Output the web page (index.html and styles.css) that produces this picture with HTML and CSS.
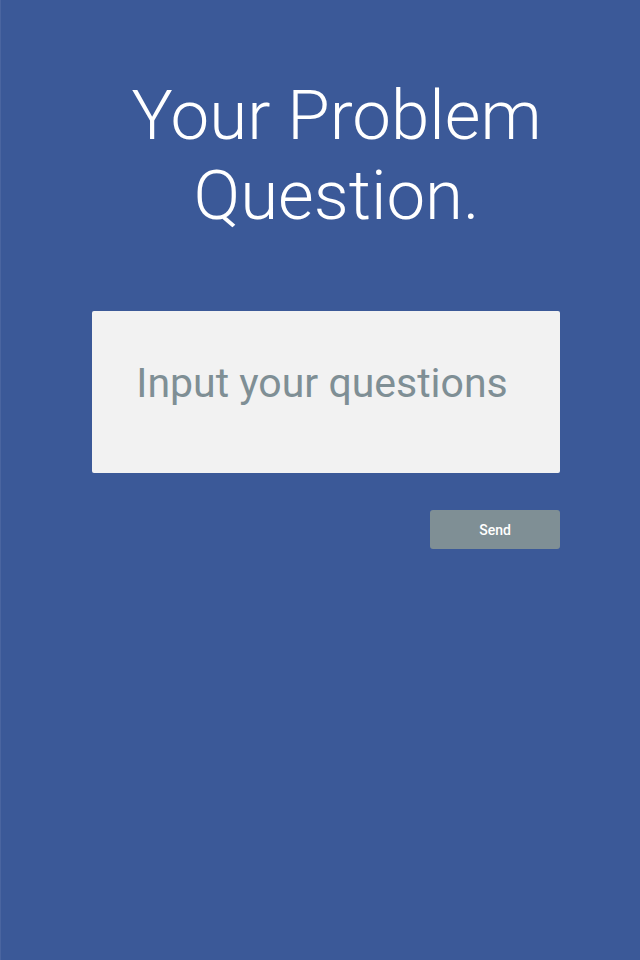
FILE: index.html
```html
<!DOCTYPE html>
<html>
<head>
<meta charset="utf-8">
<link rel="stylesheet" href="styles.css">
</head>
<body>
<main class="page">
  <h1 class="title">Your Problem<br>Question.</h1>
  <div class="form">
    <div class="input-box">
      <span class="placeholder">Input your questions</span>
    </div>
    <div class="actions">
      <button class="send">Send</button>
    </div>
  </div>
</main>
</body>
</html>
```

FILE: styles.css
```css
html, body {
  margin: 0;
  padding: 0;
  height: 100%;
}
body {
  background: #3b5998;
  font-family: Roboto, "Noto Sans", sans-serif;
}
.page {
  min-height: 960px;
  box-sizing: border-box;
  border-left: 1px solid #4a65a0;
  padding-top: 76px;
}
.title {
  margin: 0;
  padding-left: 32px;
  text-align: center;
  color: #ffffff;
  font-weight: 300;
  font-size: 69px;
  line-height: 80px;
}
.form {
  margin: 75px 0 0 91px;
  width: 468px;
}
.input-box {
  height: 162px;
  box-sizing: border-box;
  padding: 0 8px 18px 0;
  background: #f2f2f2;
  border-radius: 2px;
  display: flex;
  align-items: center;
  justify-content: center;
}
.placeholder {
  color: #7f8f95;
  font-size: 41px;
  font-weight: 400;
}
.actions {
  display: flex;
  justify-content: flex-end;
  margin-top: 37px;
}
.send {
  width: 130px;
  height: 39px;
  border: none;
  border-radius: 3px;
  background: #7f8f95;
  color: #ffffff;
  font-family: Roboto, sans-serif;
  font-weight: 500;
  font-size: 14px;
  padding: 0;
}
```
